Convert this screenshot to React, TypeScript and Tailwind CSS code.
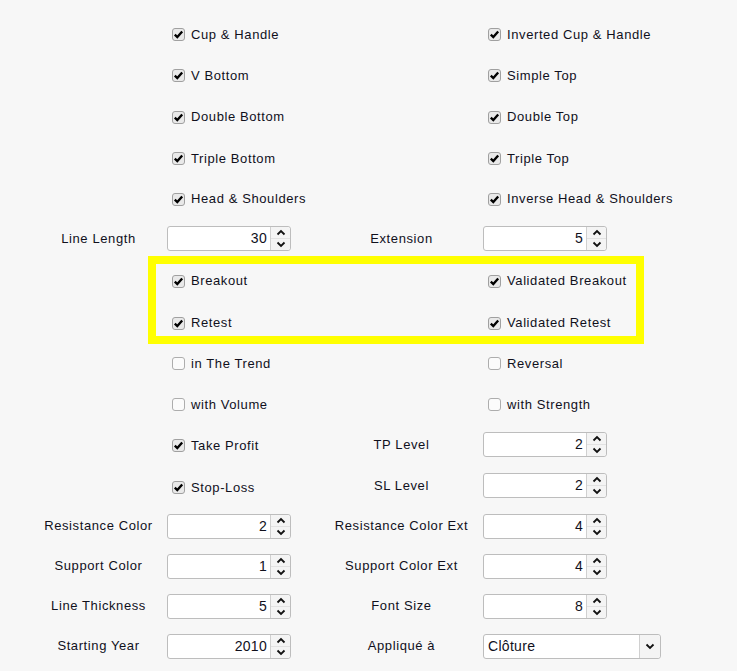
import React from 'react';

const FONT = { fontFamily: '"Liberation Sans", Arial, sans-serif' };

// Small Windows-style checkbox
const Box = ({ checked }: { checked: boolean }) => (
  <span
    className={
      checked
        ? 'w-[13px] h-[13px] rounded-[3px] border border-[#a0a0a0] bg-[#e9e9e9] flex items-center justify-center shrink-0'
        : 'w-[13px] h-[13px] rounded-[3px] border border-[#adadad] bg-[#fbfbfb] flex items-center justify-center shrink-0'
    }
  >
    {checked && (
      <svg width="11" height="11" viewBox="0 0 11 11">
        <path d="M1.8 5.6 L4.3 8.1 L9.2 2.4" stroke="#000" strokeWidth="2.3" fill="none" />
      </svg>
    )}
  </span>
);

const CheckItem = ({
  label,
  checked = true,
  className = '',
}: {
  label: string;
  checked?: boolean;
  className?: string;
}) => (
  <div className={`flex items-center gap-[6px] pl-[5px] whitespace-nowrap ${className}`}>
    <Box checked={checked} />
    <span>{label}</span>
  </div>
);

const Label = ({ text }: { text: string }) => (
  <div className="text-center whitespace-nowrap">{text}</div>
);

const Chevron = ({ up }: { up?: boolean }) => (
  <svg width="10" height="7" viewBox="0 0 10 7">
    <path
      d={up ? 'M1.5 5.5 L5 2 L8.5 5.5' : 'M1.5 1.5 L5 5 L8.5 1.5'}
      stroke="#111"
      strokeWidth="1.8"
      fill="none"
    />
  </svg>
);

const Spin = ({ value }: { value: string }) => (
  <div className="w-[124px] h-[25px] flex border border-[#bdbdbd] rounded-[3px] bg-white">
    <div className="flex-1 flex items-center justify-end pr-[3px] text-[14px] tracking-[0.3px]">{value}</div>
    <div className="w-[20px] border-l border-[#d0d0d0] bg-[#f4f4f4] flex flex-col rounded-r-[3px]">
      <div className="flex-1 flex items-center justify-center">
        <Chevron up />
      </div>
      <div className="flex-1 flex items-center justify-center border-t border-[#e2e2e2]">
        <Chevron />
      </div>
    </div>
  </div>
);

const Select = ({ value }: { value: string }) => (
  <div className="w-[178px] h-[25px] flex border border-[#bdbdbd] rounded-[3px] bg-white">
    <div className="flex-1 flex items-center pl-[4px] text-[14px] tracking-[0.3px]">{value}</div>
    <div className="w-[21px] border-l border-[#d0d0d0] bg-[#f4f4f4] flex items-center justify-center rounded-r-[3px]">
      <Chevron />
    </div>
  </div>
);

const Empty = () => <div />;

export default function App() {
  return (
    <div
      className="min-h-[671px] w-[737px] bg-[#f7f7f7] text-[13px] tracking-[0.6px] text-[#10101c] pt-[14px] pl-[30px]"
      style={FONT}
    >
      <div className="grid grid-cols-[137px_153px_163px_180px]">
        <div className="col-span-4 grid grid-cols-subgrid h-[41px] items-center">
          <Empty /><CheckItem label="Cup & Handle" /><Empty /><CheckItem label="Inverted Cup & Handle" />
        </div>
        <div className="col-span-4 grid grid-cols-subgrid h-[41px] items-center">
          <Empty /><CheckItem label="V Bottom" /><Empty /><CheckItem label="Simple Top" />
        </div>
        <div className="col-span-4 grid grid-cols-subgrid h-[42px] items-center">
          <Empty /><CheckItem label="Double Bottom" /><Empty /><CheckItem label="Double Top" />
        </div>
        <div className="col-span-4 grid grid-cols-subgrid h-[41px] items-center">
          <Empty /><CheckItem label="Triple Bottom" /><Empty /><CheckItem label="Triple Top" />
        </div>
        <div className="col-span-4 grid grid-cols-subgrid h-[40px] items-center">
          <Empty /><CheckItem label="Head & Shoulders" /><Empty /><CheckItem label="Inverse Head & Shoulders" />
        </div>
        <div className="col-span-4 grid grid-cols-subgrid h-[39px] items-center">
          <Label text="Line Length" /><Spin value="30" /><Label text="Extension" /><Spin value="5" />
        </div>

        {/* highlighted block */}
        <div className="col-span-4 grid grid-cols-subgrid relative">
          <div className="col-span-4 grid grid-cols-subgrid h-[42px] pt-[4px] items-center">
            <Empty /><CheckItem label="Breakout" /><Empty /><CheckItem label="Validated Breakout" />
          </div>
          <div className="col-span-4 grid grid-cols-subgrid h-[42px] pt-[4px] items-center">
            <Empty /><CheckItem label="Retest" /><Empty /><CheckItem label="Validated Retest" />
          </div>
          <div className="absolute top-[-2px] bottom-[-2px] left-[118px] right-[19px] border-[8px] border-[#ffff00] pointer-events-none" />
        </div>

        <div className="col-span-4 grid grid-cols-subgrid h-[41px] pt-[2px] items-center">
          <Empty /><CheckItem label="in The Trend" checked={false} /><Empty /><CheckItem label="Reversal" checked={false} />
        </div>
        <div className="col-span-4 grid grid-cols-subgrid h-[41px] pt-[2px] items-center">
          <Empty /><CheckItem label="with Volume" checked={false} /><Empty /><CheckItem label="with Strength" checked={false} />
        </div>
        <div className="col-span-4 grid grid-cols-subgrid h-[41px] items-center">
          <Empty /><CheckItem label="Take Profit" className="mt-[2px]" /><Label text="TP Level" /><Spin value="2" />
        </div>
        <div className="col-span-4 grid grid-cols-subgrid h-[41px] items-center">
          <Empty /><CheckItem label="Stop-Loss" className="mt-[4px]" /><Label text="SL Level" /><Spin value="2" />
        </div>
        <div className="col-span-4 grid grid-cols-subgrid h-[40px] items-center">
          <Label text="Resistance Color" /><Spin value="2" /><Label text="Resistance Color Ext" /><Spin value="4" />
        </div>
        <div className="col-span-4 grid grid-cols-subgrid h-[40px] items-center">
          <Label text="Support Color" /><Spin value="1" /><Label text="Support Color Ext" /><Spin value="4" />
        </div>
        <div className="col-span-4 grid grid-cols-subgrid h-[40px] items-center">
          <Label text="Line Thickness" /><Spin value="5" /><Label text="Font Size" /><Spin value="8" />
        </div>
        <div className="col-span-4 grid grid-cols-subgrid h-[40px] items-center">
          <Label text="Starting Year" /><Spin value="2010" /><Label text="Appliqué à" /><Select value="Clôture" />
        </div>
      </div>
    </div>
  );
}
